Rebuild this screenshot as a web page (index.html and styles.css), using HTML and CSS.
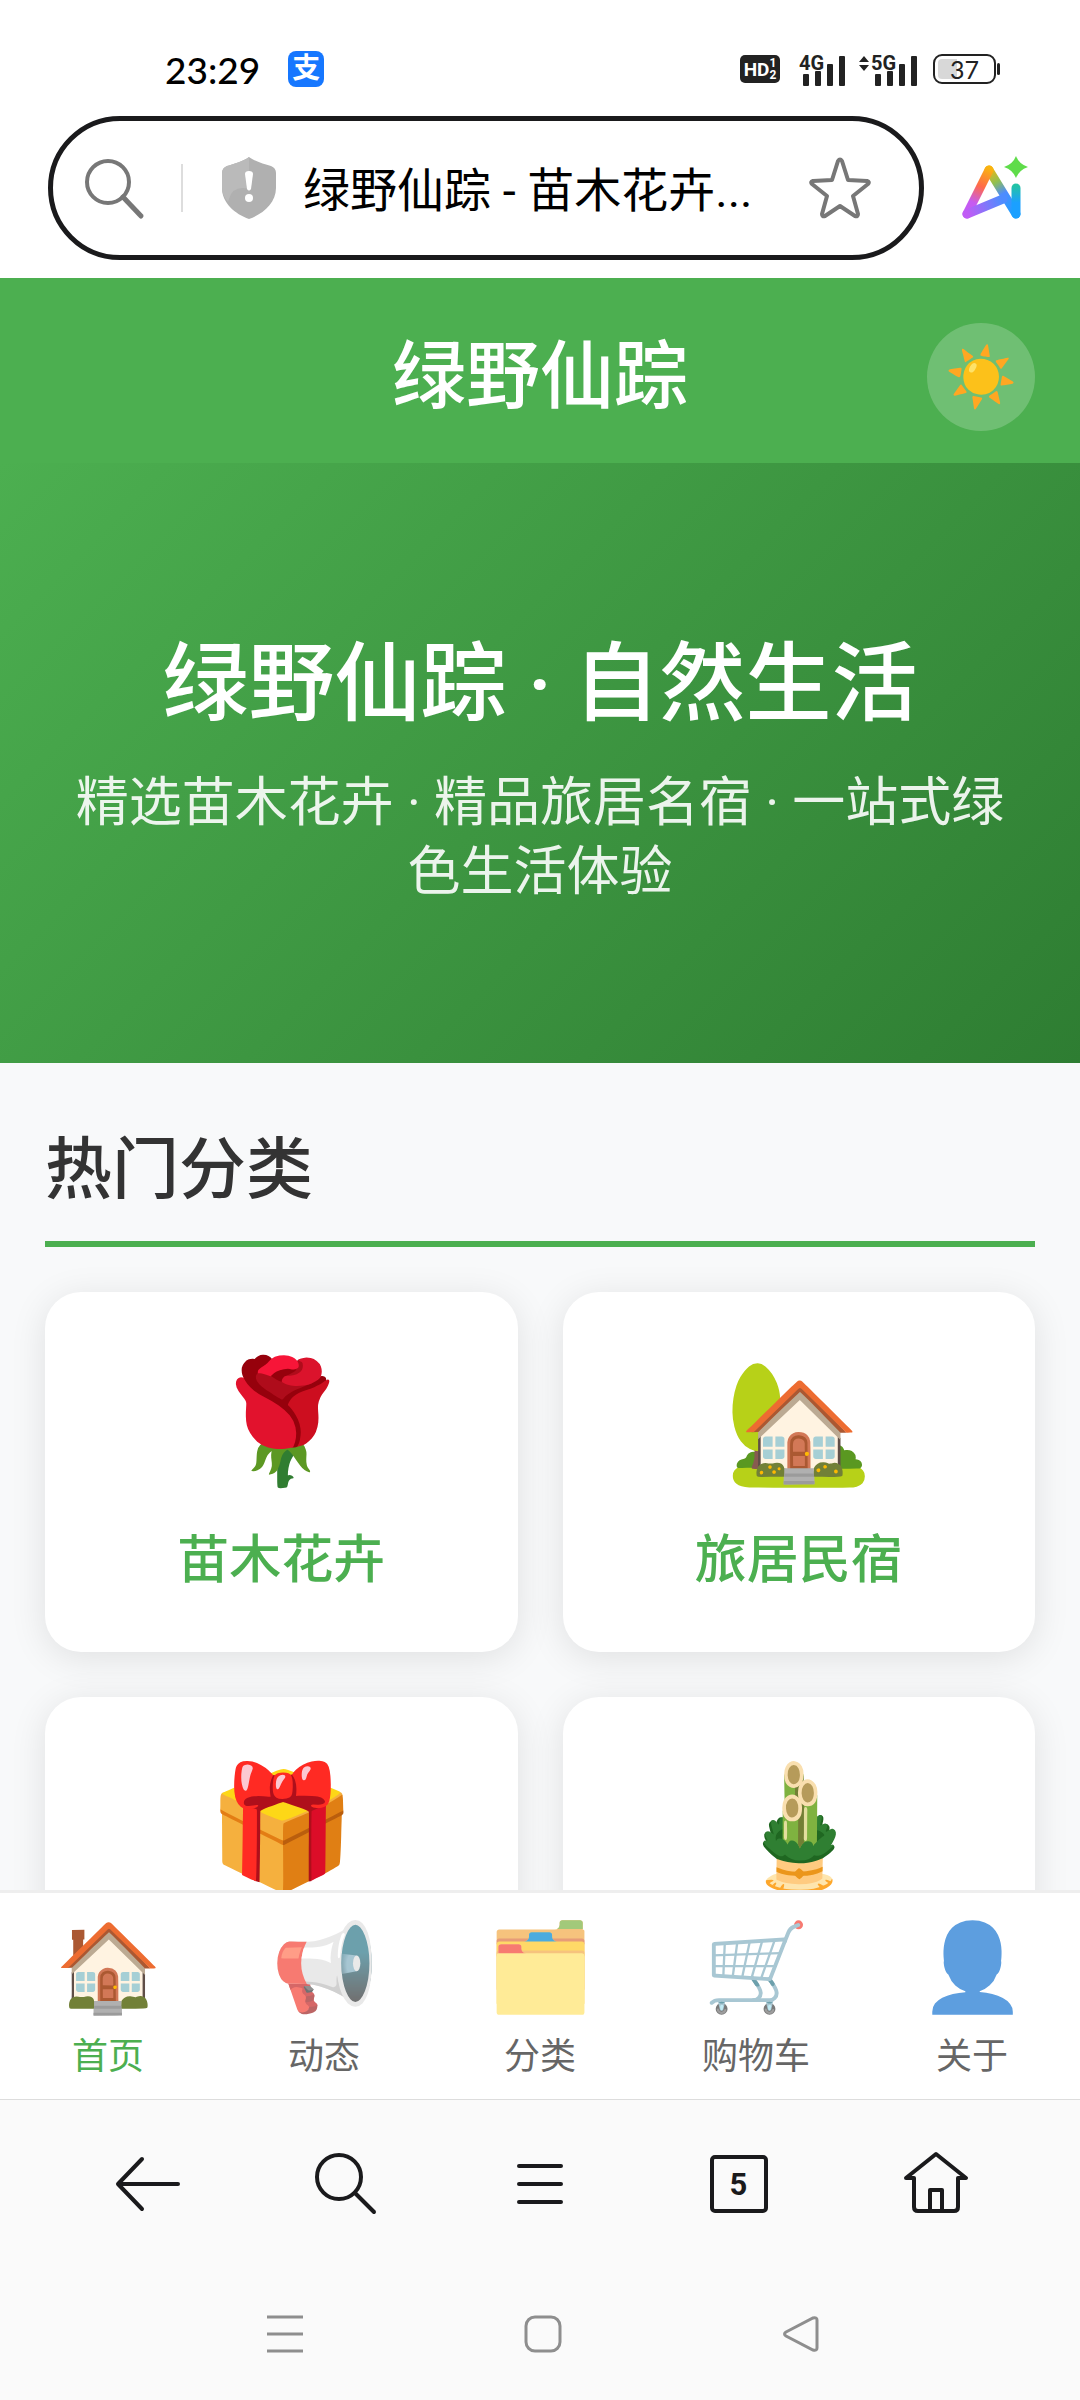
FILE: index.html
```html
<!DOCTYPE html>
<html lang="zh-CN">
<head>
  <meta charset="UTF-8">
  <meta name="viewport" content="width=device-width, initial-scale=1.0">
  <title>绿野仙踪 - 苗木花卉</title>
  <link rel="stylesheet" href="styles.css">
</head>
<body>
  <!-- 状态栏 -->
  <div class="status-bar">
    <div class="status-left">
      <span class="time">23:29</span>
      <span class="pay-icon">支</span>
    </div>
    <div class="status-right">
      <span class="hd">HD<span class="hd-nums"><span>1</span><span>2</span></span></span>
      <span class="signal">
        <svg width="48" height="34" viewBox="0 0 48 34" fill="#222">
          <text x="0" y="18" class="net">4G</text>
          <rect x="4" y="22" width="6" height="12" rx="1"/>
          <rect x="16" y="19" width="6" height="15" rx="1"/>
          <rect x="28" y="12" width="6" height="22" rx="1"/>
          <rect x="40" y="4" width="6" height="30" rx="1"/>
        </svg>
      </span>
      <span class="signal">
        <svg class="arrows" width="12" height="15" viewBox="0 0 12 15"><path d="M6 0l5 6H1zM6 15l5-6H1z" fill="#222"/></svg>
        <svg width="48" height="34" viewBox="0 0 48 34" fill="#222">
          <text x="0" y="18" class="net">5G</text>
          <rect x="4" y="22" width="6" height="12" rx="1"/>
          <rect x="16" y="19" width="6" height="15" rx="1"/>
          <rect x="28" y="12" width="6" height="22" rx="1"/>
          <rect x="40" y="4" width="6" height="30" rx="1"/>
        </svg>
      </span>
      <span class="battery">37</span>
    </div>
  </div>

  <!-- 地址栏 -->
  <div class="address-row">
    <div class="address-bar">
      <svg width="64" height="64" viewBox="0 0 64 64" fill="none" stroke="#777" stroke-width="4" stroke-linecap="round">
        <circle cx="26" cy="26" r="21"/>
        <path d="M41 41l18 19" stroke-width="5"/>
      </svg>
      <span class="divider"></span>
      <svg width="54" height="62" viewBox="0 0 54 62">
        <path d="M27 0C32 4 42 7 49 9q5 2 5 7v15c0 15-13 26-27 31C13 57 0 46 0 31V16q0-5 5-7C12 7 22 4 27 0z" fill="#b0b0b0"/>
        <path d="M27 0v32q-16-4-20 10l-1 3Q0 38 0 31V16q0-5 5-7C12 7 22 4 27 0z" fill="#bababa"/>
        <path d="M23 17q0-3 4-3t4 3l-2 15q-2 3-4 0z" fill="#fff"/>
        <circle cx="27" cy="41" r="4" fill="#fff"/>
      </svg>
      <span class="address-text">绿野仙踪 - 苗木花卉...</span>
      <button class="icon-btn" aria-label="收藏">
        <svg width="62" height="62" viewBox="0 0 62 62" fill="none" stroke="#777" stroke-width="4" stroke-linejoin="round">
          <path d="M29 4q2-3 4 0l6 19 19 1q3 1 1 3L44 39l5 18q0 3-3 2L31 49 16 59q-3 1-3-2l5-18L3 27q-2-2 1-3l19-1z"/>
        </svg>
      </button>
    </div>
    <button class="icon-btn" aria-label="AI">
      <svg width="66" height="64" viewBox="0 0 66 64" fill="none" stroke-linecap="round" stroke-linejoin="round">
        <defs>
          <linearGradient id="aiLeft" gradientUnits="userSpaceOnUse" x1="27" y1="12" x2="6" y2="58">
            <stop offset="0" stop-color="#f9b40f"/>
            <stop offset="0.4" stop-color="#ff6a4a"/>
            <stop offset="0.75" stop-color="#c65bf0"/>
            <stop offset="1" stop-color="#c05cf5"/>
          </linearGradient>
          <linearGradient id="aiRight" gradientUnits="userSpaceOnUse" x1="27" y1="12" x2="54" y2="58">
            <stop offset="0" stop-color="#f9b40f"/>
            <stop offset="0.3" stop-color="#8fc050"/>
            <stop offset="0.55" stop-color="#4d8cff"/>
            <stop offset="1" stop-color="#1ba0ff"/>
          </linearGradient>
          <linearGradient id="aiBottom" gradientUnits="userSpaceOnUse" x1="6" y1="58" x2="40" y2="44">
            <stop offset="0" stop-color="#c05cf5"/>
            <stop offset="1" stop-color="#4d8cff"/>
          </linearGradient>
          <linearGradient id="aiStem" gradientUnits="userSpaceOnUse" x1="54" y1="30" x2="54" y2="58">
            <stop offset="0" stop-color="#22c3a6"/>
            <stop offset="0.6" stop-color="#1ba0ff"/>
          </linearGradient>
        </defs>
        <path d="M54 58L27 14" stroke="url(#aiRight)" stroke-width="9"/>
        <path d="M27 14L5 58" stroke="url(#aiLeft)" stroke-width="9"/>
        <path d="M5 58l36-15" stroke="url(#aiBottom)" stroke-width="9"/>
        <path d="M54 32v26" stroke="url(#aiStem)" stroke-width="9"/>
        <path d="M54 0q3 8 12 11-9 3-12 11-3-8-12-11 9-3 12-11z" fill="#5fdc4a"/>
      </svg>
    </button>
  </div>

  <!-- 网页内容 -->
  <div class="site">
    <header class="header">
      <span class="logo">绿野仙踪</span>
      <button class="theme-btn" aria-label="切换主题">☀️</button>
    </header>

    <section class="hero">
      <h1>绿野仙踪 · 自然生活</h1>
      <p>精选苗木花卉 · 精品旅居名宿 · 一站式绿色生活体验</p>
    </section>

    <main class="content">
      <h2 class="section-title">热门分类</h2>
      <div class="category-grid">
        <a class="card" href="#"><span class="card-icon">🌹</span><h3>苗木花卉</h3></a>
        <a class="card" href="#"><span class="card-icon">🏡</span><h3>旅居民宿</h3></a>
        <a class="card" href="#"><span class="card-icon">🎁</span></a>
        <a class="card" href="#"><span class="card-icon">🎍</span></a>
      </div>
    </main>
  </div>

  <!-- 底部导航 -->
  <nav class="tab-bar">
    <a class="tab active" href="#"><span class="tab-icon">🏠</span>首页</a>
    <a class="tab" href="#"><span class="tab-icon">📢</span>动态</a>
    <a class="tab" href="#"><span class="tab-icon">🗂️</span>分类</a>
    <a class="tab" href="#"><span class="tab-icon">🛒</span>购物车</a>
    <a class="tab" href="#"><span class="tab-icon">👤</span>关于</a>
  </nav>

  <!-- 浏览器工具栏 -->
  <div class="browser-bar">
    <button class="icon-btn" aria-label="后退">
      <svg width="66" height="66" viewBox="0 0 66 66"><path d="M27 8L3 33l24 25M4 33h59"/></svg>
    </button>
    <button class="icon-btn" aria-label="搜索">
      <svg width="66" height="66" viewBox="0 0 66 66"><circle cx="27" cy="26" r="22"/><path d="M43 42l19 19"/></svg>
    </button>
    <button class="icon-btn" aria-label="菜单">
      <svg width="66" height="66" viewBox="0 0 66 66"><path d="M10 15h42M10 33h42M10 51h42"/></svg>
    </button>
    <button class="tab-count" aria-label="标签页">5</button>
    <button class="icon-btn" aria-label="主页">
      <svg width="66" height="66" viewBox="0 0 66 66"><path d="M11 27H3L33 3l30 24h-8v29q0 4-4 4H15q-4 0-4-4zM27 60V39h12v21"/></svg>
    </button>
  </div>

  <!-- 系统导航 -->
  <div class="system-bar">
    <button class="icon-btn" aria-label="最近任务">
      <svg width="40" height="40" viewBox="0 0 40 40"><path d="M2 3h36M2 20h36M2 37h36"/></svg>
    </button>
    <button class="icon-btn" aria-label="桌面">
      <svg width="40" height="40" viewBox="0 0 40 40"><rect x="3" y="3" width="34" height="34" rx="9"/></svg>
    </button>
    <button class="icon-btn" aria-label="返回">
      <svg width="40" height="40" viewBox="0 0 40 40"><path d="M5 18L32 4q4-1 4 2v28q0 3-4 2L5 22q-3-2 0-4z"/></svg>
    </button>
  </div>
</body>
</html>
```

FILE: styles.css
```css
* {
  box-sizing: border-box;
}

body {
  display: flex;
  flex-direction: column;
  height: 100vh;
  margin: 0;
  background-color: #fff;
  font-family: Roboto, "Noto Sans CJK SC", sans-serif;
  color: #333;
}

h1, h2, h3, p {
  margin: 0;
}

a {
  color: inherit;
  text-decoration: none;
}

svg {
  display: block;
  flex-shrink: 0;
}

button {
  padding: 0;
  border: none;
  background: none;
  color: inherit;
  font-family: inherit;
  cursor: pointer;
}

/* 状态栏 */
.status-bar {
  display: flex;
  justify-content: space-between;
  align-items: center;
  height: 116px;
  padding: 22px 84px 0 165px;
}

.status-left,
.status-right {
  display: flex;
  align-items: center;
}

.status-left {
  gap: 28px;
}

.time {
  font-family: Lato, sans-serif;
  font-size: 37px;
  font-weight: 500;
  color: #000;
}

.pay-icon {
  width: 36px;
  height: 36px;
  border-radius: 8px;
  background-color: #1677ff;
  color: #fff;
  font-size: 28px;
  font-weight: 700;
  line-height: 36px;
  text-align: center;
}

.hd {
  display: flex;
  align-items: center;
  justify-content: center;
  width: 40px;
  height: 28px;
  margin-right: 19px;
  border-radius: 5px;
  background-color: #222;
  color: #fff;
  font-size: 19px;
  font-weight: 700;
}

.hd-nums {
  display: flex;
  flex-direction: column;
  font-size: 12px;
  line-height: 12px;
}

.signal {
  display: flex;
  align-items: flex-start;
}

.arrows {
  margin: 4px 1px 0 11px;
}

.net {
  font-size: 20px;
  font-weight: 700;
}

.battery {
  position: relative;
  width: 63px;
  height: 30px;
  margin-left: 14px;
  border: 2px solid #222;
  border-radius: 9px;
  background: linear-gradient(to right, #d8d8d8 37%, #fff 37%);
  background-clip: content-box;
  padding: 3px;
  color: #222;
  font-family: Lato, sans-serif;
  font-size: 25px;
  line-height: 20px;
  text-align: center;
}

.battery::after {
  content: "";
  position: absolute;
  top: 7px;
  right: -6px;
  width: 3px;
  height: 12px;
  border-radius: 2px;
  background-color: #222;
}

/* 地址栏 */
.address-row {
  display: flex;
  align-items: center;
  gap: 38px;
  padding: 0 52px 18px 48px;
}

.address-bar {
  display: flex;
  flex: 1;
  align-items: center;
  height: 144px;
  padding: 0 48px 0 29px;
  border: 5px solid #1a1a1c;
  border-radius: 72px;
}

.divider {
  width: 2px;
  height: 48px;
  margin: 0 39px 0 35px;
  background-color: #ddd;
}

.address-text {
  flex: 1;
  margin-left: 27px;
  padding-bottom: 4px;
  color: #000;
  font-size: 47px;
  white-space: nowrap;
}

/* 页头 */
.site {
  flex: 1;
  min-height: 0;
  overflow: hidden;
  background-color: #f8f9fa;
}

.header {
  display: grid;
  grid-template-columns: 1fr auto 1fr;
  align-items: center;
  padding: 44px 45px 32px;
  background-color: #4caf50;
  color: #fff;
}

.logo {
  grid-column: 2;
  font-size: 74px;
  font-weight: 500;
  line-height: 109px;
}

.theme-btn {
  justify-self: end;
  width: 108px;
  height: 108px;
  border-radius: 50%;
  background-color: rgba(255, 255, 255, 0.2);
  font-size: 58px;
  line-height: 108px;
}

.hero {
  display: flex;
  flex-direction: column;
  justify-content: center;
  gap: 24px;
  min-height: 600px;
  padding: 6px 68px 0;
  background: linear-gradient(135deg, #4caf50, #2e7d32);
  color: #fff;
  text-align: center;
}

.hero h1 {
  font-size: 86px;
  font-weight: 500;
  line-height: 120px;
}

.hero p {
  font-size: 53px;
  line-height: 69px;
  opacity: 0.9;
}

/* 热门分类 */
.content {
  padding: 45px;
}

.section-title {
  margin-bottom: 45px;
  padding: 7px 0 15px;
  border-bottom: 6px solid #4caf50;
  font-size: 67px;
  font-weight: 500;
  line-height: 111px;
}

.category-grid {
  display: grid;
  grid-template-columns: 1fr 1fr;
  gap: 45px;
}

.card {
  display: flex;
  flex-direction: column;
  align-items: center;
  gap: 27px;
  height: 360px;
  padding-top: 58px;
  border-radius: 36px;
  background-color: #fff;
  box-shadow: 0 6px 36px rgba(0, 0, 0, 0.1);
}

.card-icon {
  font-size: 120px;
  line-height: 144px;
}

.card h3 {
  color: #4caf50;
  font-size: 52px;
  font-weight: 500;
  line-height: 80px;
}

/* 底部导航 */
.tab-bar {
  display: grid;
  grid-template-columns: repeat(5, 1fr);
  height: 210px;
  border-top: 3px solid #eee;
  border-bottom: 1px solid #ddd;
  background-color: #fff;
}

.tab {
  display: flex;
  flex-direction: column;
  align-items: center;
  gap: 12px;
  padding-top: 24px;
  color: #666;
  font-size: 36px;
  line-height: 52px;
}

.tab-icon {
  font-size: 86px;
  line-height: 102px;
  opacity: 0.7;
}

.tab.active {
  color: #4caf50;
}

.active .tab-icon {
  opacity: 1;
}

/* 浏览器工具栏 */
.browser-bar {
  display: grid;
  grid-template-columns: repeat(5, 1fr);
  justify-items: center;
  align-items: center;
  height: 168px;
  padding: 0 46px 0 49px;
  background-color: #fafafa;
}

.browser-bar svg {
  fill: none;
  stroke: #1a1a1c;
  stroke-width: 4;
  stroke-linecap: round;
  stroke-linejoin: round;
}

.tab-count {
  width: 58px;
  height: 58px;
  border: 4px solid #1a1a1c;
  border-radius: 5px;
  color: #1a1a1c;
  font-size: 31px;
  font-weight: 700;
}

.system-bar {
  display: grid;
  grid-template-columns: repeat(3, 1fr);
  justify-items: center;
  align-items: center;
  height: 132px;
  padding: 0 150px 0 156px;
  background-color: #fafafa;
}

.system-bar svg {
  fill: none;
  stroke: #8e8e8e;
  stroke-width: 3;
}
```
